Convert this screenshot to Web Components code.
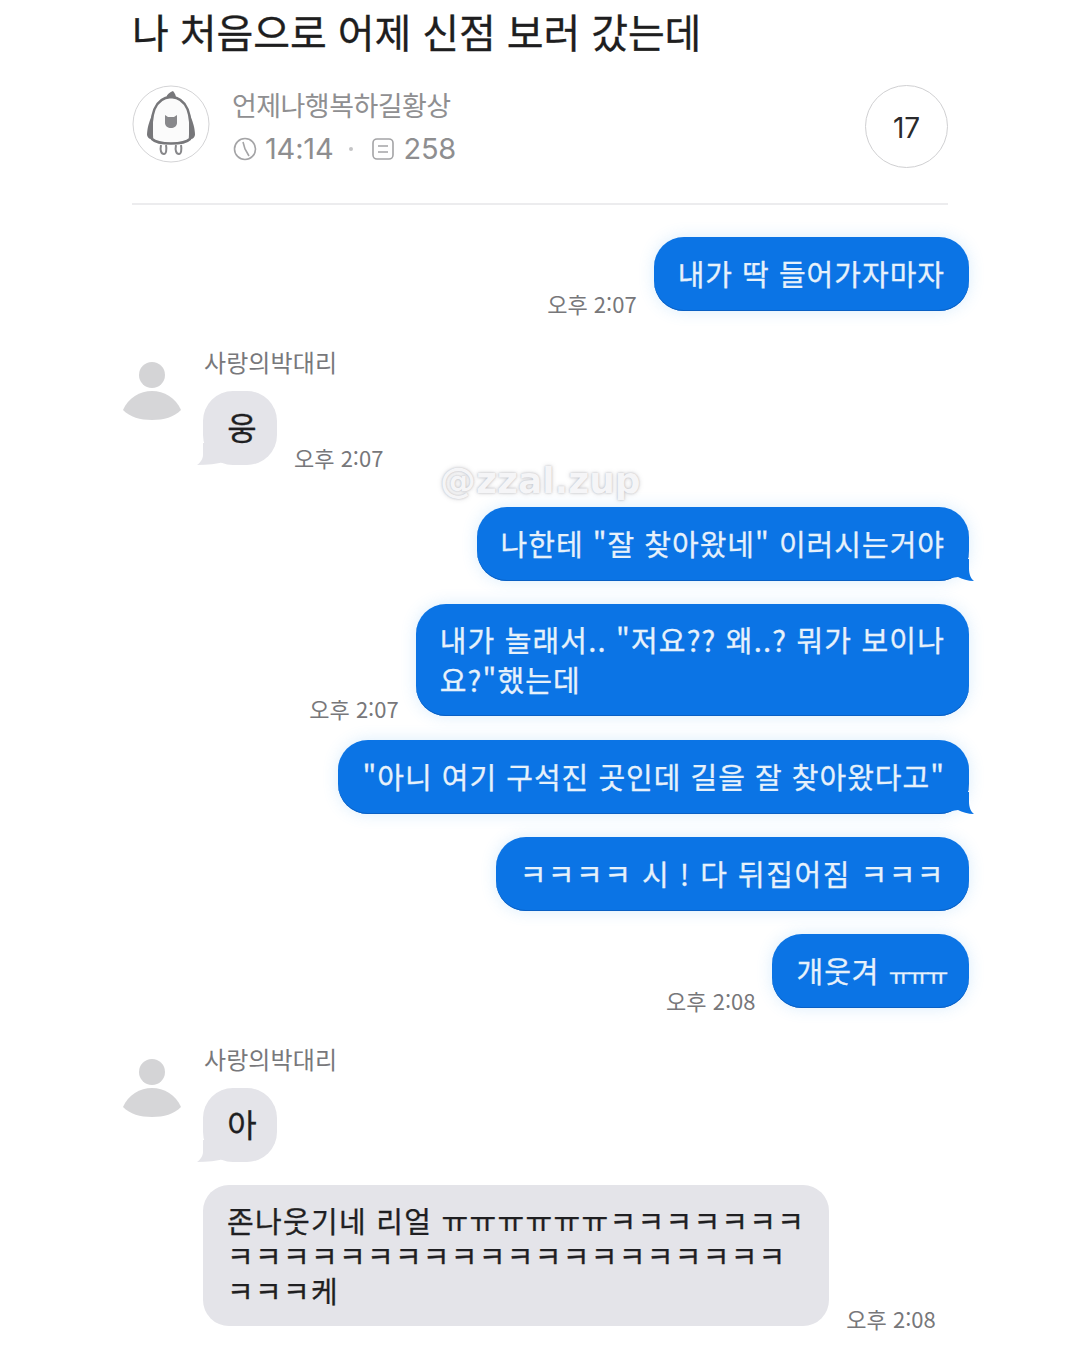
<!DOCTYPE html>
<html lang="ko">
<head>
<meta charset="utf-8">
<title>신점</title>
<style>
	html,body {margin:0;background:#fff;}
	body {font-family:"Noto Sans CJK KR","Noto Sans",sans-serif;}
</style>
</head>
<body>
<chat-page>
	<post-header slot="header" title="나 처음으로 어제 신점 보러 갔는데" author="언제나행복하길황상" time="14:14" views="258" comments="17"></post-header>

	<chat-row style="margin-top:32px" time="오후 2:07"><chat-bubble>내가 딱 들어가자마자</chat-bubble></chat-row>

	<chat-row side="them" style="margin-top:37px" name="사랑의박대리" avatar time="오후 2:07"><chat-bubble side="them" tail style="--fs:32px;width:74px;padding:15px 0 0 4px;text-align:center">웅</chat-bubble></chat-row>

	<chat-row style="margin-top:42px"><chat-bubble tail>나한테 "잘 찾아왔네" 이러시는거야</chat-bubble></chat-row>
	<chat-row style="margin-top:23px" time="오후 2:07"><chat-bubble style="--ls:1.17px;padding-top:15px;padding-bottom:17px">내가 놀래서.. "저요?? 왜..? 뭐가 보이나<br>요?"했는데</chat-bubble></chat-row>
	<chat-row style="margin-top:24px"><chat-bubble tail>"아니 여기 구석진 곳인데 길을 잘 찾아왔다고"</chat-bubble></chat-row>
	<chat-row style="margin-top:23px"><chat-bubble style="--ls:1.5px">ㅋㅋㅋㅋ 시 ! 다 뒤집어짐 ㅋㅋㅋ</chat-bubble></chat-row>
	<chat-row style="margin-top:23px" time="오후 2:08"><chat-bubble>개웃겨 <span style="font-size:24px;line-height:0;letter-spacing:-3.3px;vertical-align:-2px">ㅠㅠㅠ</span></chat-bubble></chat-row>

	<chat-row side="them" style="margin-top:37px" name="사랑의박대리" avatar><chat-bubble side="them" tail style="--fs:32px;width:74px;padding:15px 0 0 4px;text-align:center">아</chat-bubble></chat-row>
	<chat-row side="them" style="margin-top:23px" time="오후 2:08"><chat-bubble side="them" wide style="--ls:1.3px;--lh:35px;padding-top:21px;padding-bottom:15px;font-family:'Liberation Sans','Noto Sans CJK KR',sans-serif">존나웃기네 리얼 ㅠㅠㅠㅠㅠㅠㅋㅋㅋㅋㅋㅋㅋ<br>ㅋㅋㅋㅋㅋㅋㅋㅋㅋㅋㅋㅋㅋㅋㅋㅋㅋㅋㅋㅋ<br>ㅋㅋㅋ케</chat-bubble></chat-row>

	<water-mark>@zzal.zup</water-mark>
</chat-page>

<script>
class ChatPage extends HTMLElement {
	constructor(){
		super();
		this.attachShadow({mode:"open"});
		this.shadowRoot.innerHTML = `
			<style>
				:host {
					display: block;
					position: relative;
					width: 1080px;
					height: 1350px;
					overflow: hidden;
					background: #fff;
				}
				main {
					display: flex;
					flex-direction: column;
				}
			</style>
			<main>
				<slot name="header"></slot>
				<slot></slot>
			</main>
		`;
	}
}
customElements.define("chat-page",ChatPage);

class PostHeader extends HTMLElement {
	connectedCallback(){
		if (this.shadowRoot) return;
		this.attachShadow({mode:"open"});
		this.shadowRoot.innerHTML = `
			<style>
				:host {
					display: block;
					padding: 0 132px;
				}
				h1 {
					margin: 0;
					height: 66px;
					font: 400 40px/62px "Noto Sans CJK KR",sans-serif;
					color: #1e1e20;
					letter-spacing: -0.1px;
					-webkit-text-stroke: 0.3px #1e1e20;
					white-space: nowrap;
				}
				.info {
					display: flex;
					align-items: center;
					height: 139px;
					box-sizing: border-box;
					border-bottom: 2px solid #ececee;
					padding-bottom: 17px;
				}
				.avatar {
					flex: none;
					width: 78px;
					height: 78px;
					margin-top: -4px;
				}
				.meta {
					flex: 1;
					margin-left: 22px;
					color: #8c8c8e;
				}
				.author {
					font-size: 27px;
					line-height: 38px;
					margin-top: 2px;
					letter-spacing: -0.55px;
					color: #8f8f91;
				}
				.stats {
					display: flex;
					align-items: center;
					font: 400 29px/38px Inter,"Noto Sans",sans-serif;
					margin-top: 6px;
					color: #8e8e90;
				}
				.stats svg {
					flex: none;
					width: 26px;
					height: 26px;
				}
				.dot {
					width: 4px;
					height: 4px;
					border-radius: 50%;
					background: #c4c4c6;
					margin: 0 17px 0 16px;
				}
				.stats span {
					margin-left: 7px;
					letter-spacing: -0.2px;
				}
				.count {
					flex: none;
					display: flex;
					align-items: center;
					justify-content: center;
					box-sizing: border-box;
					width: 83px;
					height: 83px;
					padding-top: 3px;
					border: 1px solid #d0d0d2;
					border-radius: 50%;
					font: 400 28px Inter,"Noto Sans",sans-serif;
					color: #2a2a2c;
				}
			</style>
			<h1>${this.getAttribute("title")}</h1>
			<div class="info">
				<svg class="avatar" viewBox="0 0 78 78">
					<circle cx="39" cy="39" r="38" fill="#fff" stroke="#d4d4d6" stroke-width="1"/>
					<path d="M34 13C35 9 38 7 41 6C43 8 44 11 44 13Z" fill="#77777a"/>
					<path d="M20 54C18 30 22 13 39 12C56 13 60 30 58 54C52 60 26 60 20 54Z" fill="#fbfbfb" stroke="#77777a" stroke-width="2.500"/>
					<path d="M21 28C17 36 15 44 15 50C16 54 19 55 21 53Z" fill="#77777a"/>
					<path d="M57 28C61 36 63 44 63 50C62 54 59 55 57 53Z" fill="#77777a"/>
					<path d="M33 30L36 32H42L45 30L45 38C45 41 42 43 39 43C36 43 33 41 33 38Z" fill="#88888b"/>
					<path d="M29 60C28 65 29 69 32 69C34 69 35 65 34 60M44 60C43 65 44 69 47 69C49 69 50 65 49 60" fill="#fff" stroke="#88888b" stroke-width="2"/>
				</svg>
				<div class="meta">
					<div class="author">${this.getAttribute("author")}</div>
					<div class="stats">
						<svg viewBox="0 0 26 26" fill="none" stroke="#a4a4a6" stroke-width="1.6">
							<circle cx="13" cy="13" r="10.500"/>
							<path d="M11 6L13 13L17 20"/>
						</svg>
						<span>${this.getAttribute("time")}</span>
						<i class="dot"></i>
						<svg viewBox="0 0 26 26" fill="none" stroke="#a4a4a6" stroke-width="1.6">
							<rect x="3" y="3" width="20" height="20" rx="4"/>
							<path d="M8 10H18M8 16H18"/>
						</svg>
						<span>${this.getAttribute("views")}</span>
					</div>
				</div>
				<div class="count">${this.getAttribute("comments")}</div>
			</div>
		`;
	}
}
customElements.define("post-header",PostHeader);

class ChatRow extends HTMLElement {
	connectedCallback(){
		if (this.shadowRoot) return;
		let them = this.getAttribute("side")=="them";
		let name = this.getAttribute("name");
		let time = this.getAttribute("time");
		this.attachShadow({mode:"open"});
		this.shadowRoot.innerHTML = `
			<style>
				:host {
					display: grid;
					grid-template-columns: ${them?"60px 1fr":"1fr"};
					column-gap: 21px;
					padding: ${them?"0 0 0 122px":"0 111px 0 0"};
				}
				.avatar {
					grid-row: 1 / span 2;
					width: 60px;
					height: 62px;
					margin-top: 12px;
				}
				.name {
					grid-column: 2;
					height: 25px;
					margin: 0 0 18px 1px;
					font-size: 24px;
					line-height: 27px;
					letter-spacing: 0.1px;
					color: #78787b;
				}
				.line {
					grid-column: ${them?2:1};
					display: flex;
					align-items: flex-end;
					justify-content: flex-start;
					flex-direction: ${them?"row":"row-reverse"};
					gap: 17px;
				}
				time {
					font-size: 22px;
					line-height: 22px;
					margin-bottom: -3px;
					color: #77777a;
					white-space: nowrap;
				}
			</style>
			${this.hasAttribute("avatar")?`
				<svg class="avatar" viewBox="0 0 60 62">
					<circle cx="30" cy="15" r="13" fill="#d4d4d6"/>
					<path d="M1 50C6 38 18 31 30 31C42 31 54 38 59 50C52 57 42 60 30 60C18 60 8 57 1 50Z" fill="#d6d6d8"/>
				</svg>`:""}
			${name?`<div class="name">${name}</div>`:""}
			<div class="line">
				<slot></slot>
				${time?`<time>${time}</time>`:""}
			</div>
		`;
	}
}
customElements.define("chat-row",ChatRow);

class ChatBubble extends HTMLElement {
	connectedCallback(){
		if (this.shadowRoot) return;
		let them = this.getAttribute("side")=="them";
		let tail = "";
		if (this.hasAttribute("tail")){
			tail = them
				? `<svg class="tail" style="left:-6px;bottom:0" width="30" height="22" viewBox="0 0 30 22"><path d="M6 0V12C6 16 3 20 0 22C10 22 20 21 30 18L30 0Z" fill="#e4e4e9"/></svg>`
				: `<svg class="tail" style="right:-5px;bottom:0" width="30" height="22" viewBox="0 0 30 22"><path d="M25 0V10C25 15 27 20 30 22C24 22 18 20 14 18L0 20V0Z" fill="#0b74e5"/></svg>`;
		}
		this.attachShadow({mode:"open"});
		this.shadowRoot.innerHTML = `
			<style>
				:host {
					display: block;
					position: relative;
					flex: none;
					box-sizing: border-box;
					padding: 16px 24px 18px;
					min-height: 74px;
					border-radius: ${this.hasAttribute("wide")?"26px":"30px"};
					font-size: var(--fs,29px);
					line-height: var(--lh,40px);
					letter-spacing: var(--ls,${them?"0":"1px"});
					-webkit-text-stroke: 0.3px;
					white-space: nowrap;
					background: ${them?"#e4e4e9":"#0b74e5"};
					color: ${them?"#1f1f22":"#e6f1fb"};
					box-shadow: ${them?"none":"inset 0 -1px 0 #0a60c4, 0 0 16px rgba(70,165,240,.2)"};
				}
				.tail {
					position: absolute;
				}
				.text {
					position: relative;
				}
			</style>
			${tail}
			<div class="text"><slot></slot></div>
		`;
	}
}
customElements.define("chat-bubble",ChatBubble);

class WaterMark extends HTMLElement {
	constructor(){
		super();
		this.attachShadow({mode:"open"});
		this.shadowRoot.innerHTML = `
			<style>
				:host {
					position: absolute;
					left: 440px;
					top: 456px;
					font: 700 36px/50px "DejaVu Sans",sans-serif;
					letter-spacing: 0;
					color: #f5f5f7;
					text-shadow: 0 0 2px rgba(130,130,140,.5), 0 0 5px rgba(130,130,140,.3);
					white-space: nowrap;
				}
			</style>
			<slot></slot>
		`;
	}
}
customElements.define("water-mark",WaterMark);
</script>
</body>
</html>
